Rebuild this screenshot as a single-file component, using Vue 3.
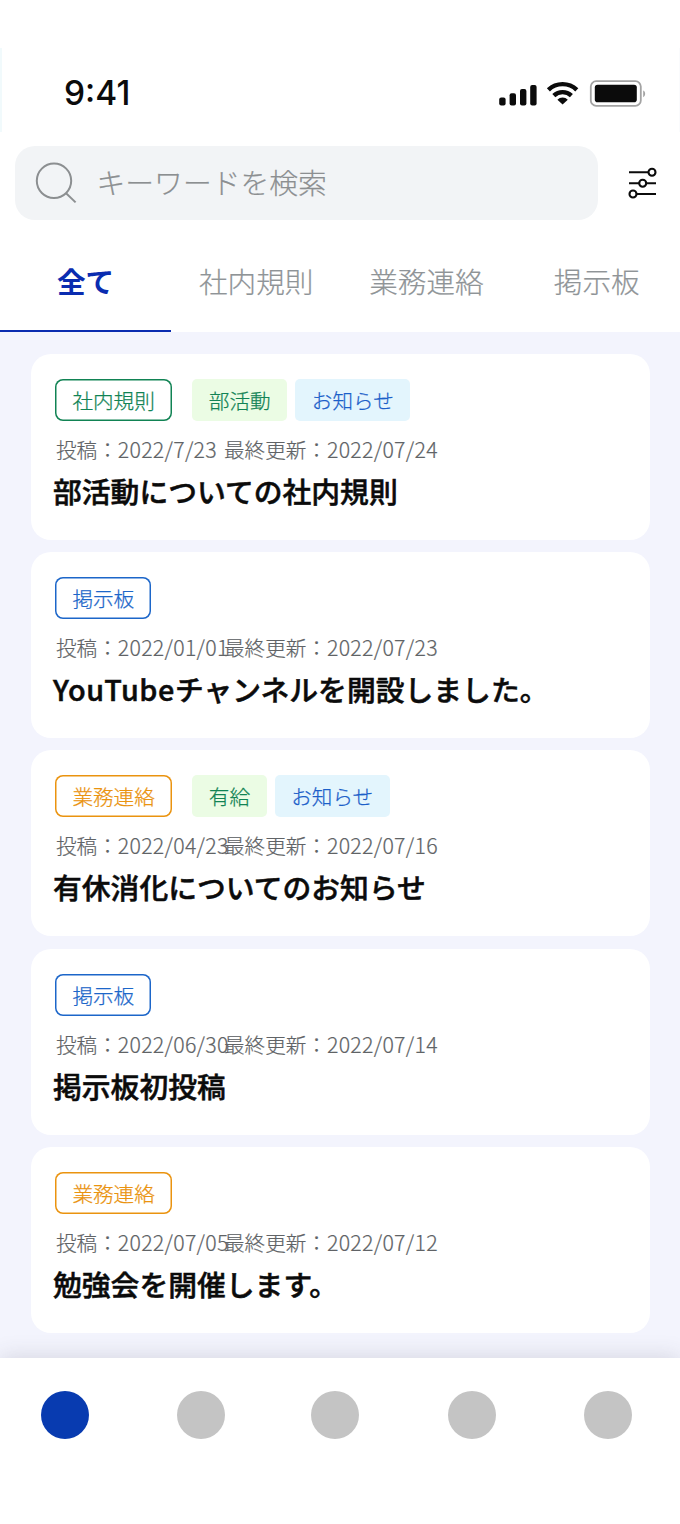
<script setup>
const tabs = ['全て', '社内規則', '業務連絡', '掲示板']

const posts = [
  {
    category: { text: '社内規則', tone: 'green' },
    tags: [{ text: '部活動', tone: 'leaf' }, { text: 'お知らせ', tone: 'sky' }],
    posted: '2022/7/23',
    updated: '2022/07/24',
    title: '部活動についての社内規則',
  },
  {
    category: { text: '掲示板', tone: 'blue' },
    tags: [],
    posted: '2022/01/01',
    updated: '2022/07/23',
    latin: 'YouTube',
    title: 'チャンネルを開設しました。',
  },
  {
    category: { text: '業務連絡', tone: 'orange' },
    tags: [{ text: '有給', tone: 'leaf' }, { text: 'お知らせ', tone: 'sky' }],
    posted: '2022/04/23',
    updated: '2022/07/16',
    title: '有休消化についてのお知らせ',
  },
  {
    category: { text: '掲示板', tone: 'blue' },
    tags: [],
    posted: '2022/06/30',
    updated: '2022/07/14',
    title: '掲示板初投稿',
  },
  {
    category: { text: '業務連絡', tone: 'orange' },
    tags: [],
    posted: '2022/07/05',
    updated: '2022/07/12',
    title: '勉強会を開催します。',
  },
]
</script>

<template>
  <div class="screen">
    <header class="status">
      <span class="time">9:41</span>
      <svg class="indicators" width="150" height="32" viewBox="0 0 150 32">
        <g fill="#0b0b0b">
          <rect x="3.2" y="20.4" width="6.4" height="8.2" rx="2" />
          <rect x="13.6" y="16.2" width="6.4" height="12.4" rx="2" />
          <rect x="24" y="12" width="6.4" height="16.6" rx="2" />
          <rect x="34.2" y="8" width="6.4" height="20.6" rx="2" />
        </g>
        <g fill="none" stroke="#0b0b0b" stroke-width="4.4">
          <path d="M52.4 12.8a20.6 20.6 0 0 1 28.4 0" />
          <path d="M57.8 18.6a12.9 12.9 0 0 1 17.6 0" />
        </g>
        <path d="M61.4 22.8a7.2 7.2 0 0 1 10.4 0L66.6 27.6Z" fill="#0b0b0b" />
        <rect x="94.8" y="4.2" width="50" height="24.6" rx="5.4" fill="none" stroke="#a3a3a3" stroke-width="1.8" />
        <rect x="98.8" y="7.8" width="42" height="17.4" rx="2.8" fill="#0b0b0b" />
        <path d="M147.2 13.6c2.6 1.2 2.6 5.4 0 6.6Z" fill="#a3a3a3" />
      </svg>
    </header>

    <div class="search-row">
      <div class="search">
        <svg class="magnifier" width="44" height="44" viewBox="0 0 44 44" fill="none" stroke="#8c8f91" stroke-width="2">
          <circle cx="20" cy="19.8" r="17.2" />
          <path d="M31.8 32 41.6 41.4" />
        </svg>
        <span class="placeholder">キーワードを検索</span>
      </div>
      <svg class="filter" width="30" height="32" viewBox="0 0 30 32" fill="none" stroke="#0b0b0b" stroke-width="2.1">
        <path d="M1 5.3h19M1 16.2h10M18.4 16.2H28M8.6 27H28" />
        <circle cx="24" cy="5.3" r="3.5" />
        <circle cx="14.7" cy="16.2" r="3.5" />
        <circle cx="5" cy="27" r="3.5" />
      </svg>
    </div>

    <nav class="tabs">
      <div v-for="(tab, i) in tabs" :key="tab" class="tab" :class="{ active: i === 0 }">{{ tab }}</div>
    </nav>

    <main class="feed">
      <article v-for="post in posts" :key="post.title" class="card">
        <div class="tags">
          <span class="tag outlined" :class="post.category.tone">{{ post.category.text }}</span>
          <span v-for="tag in post.tags" :key="tag.text" class="tag" :class="tag.tone">{{ tag.text }}</span>
        </div>
        <div class="meta">
          <span>投稿：<span class="date">{{ post.posted }}</span></span>
          <span>最終更新：<span class="date">{{ post.updated }}</span></span>
        </div>
        <h2 class="title"><span v-if="post.latin" class="latin">{{ post.latin }}</span>{{ post.title }}</h2>
      </article>
    </main>

    <footer class="bottom">
      <i v-for="n in 5" :key="n" class="dot" :class="{ on: n === 1 }"></i>
    </footer>
  </div>
</template>

<style>
body {
  margin: 0;
  background: #fff;
}
</style>

<style scoped>
.screen {
  box-sizing: border-box;
  width: 680px;
  height: 1524px;
  padding-top: 48px;
  overflow: hidden;
  display: flex;
  flex-direction: column;
  background: #fff;
  font-family: "Noto Sans CJK JP", sans-serif;
  font-weight: 300;
  white-space: nowrap;
}
.status {
  box-sizing: border-box;
  height: 84px;
  flex: none;
  display: flex;
  justify-content: space-between;
  align-items: center;
  padding: 6px 33px 0 62px;
  border-left: 2px solid #f1fafc;
  border-right: 1px solid #fafbfd;
}
.time {
  font-family: Inter, sans-serif;
  font-weight: 500;
  font-size: 33.5px;
  line-height: 40px;
  color: #0b0b0b;
}
.search-row {
  display: flex;
  align-items: center;
  padding: 14px 0 0 15px;
  height: 74px;
  flex: none;
}
.search {
  box-sizing: border-box;
  width: 583px;
  height: 74px;
  border-radius: 20px;
  background: #f2f4f6;
  display: flex;
  align-items: center;
  gap: 18.5px;
  padding-left: 19px;
  font-size: 28.8px;
  color: #8c8f91;
}
.placeholder {
  padding-bottom: 4px;
  -webkit-text-stroke: 0.2px currentColor;
}
.filter {
  margin-left: 30px;
}
.tabs {
  display: grid;
  grid-template-columns: 171px repeat(3, 170.3px);
  height: 112px;
  flex: none;
}
.tab {
  box-sizing: border-box;
  padding-top: 40px;
  line-height: 42px;
  text-align: center;
  font-size: 28.6px;
  color: #8f9497;
  -webkit-text-stroke: 0.2px currentColor;
}
.active {
  color: #0a2cb0;
  font-weight: 700;
  -webkit-text-stroke: 0;
  border-bottom: 2px solid #0a2cb0;
}
.feed {
  height: 1026px;
  flex: none;
  box-sizing: border-box;
  padding: 22px 30px 0 31px;
  display: flex;
  flex-direction: column;
  gap: 12.2px;
  background: #f3f4fd;
}
.card {
  box-sizing: border-box;
  height: 186px;
  flex: none;
  padding: 25px 0 0 24.4px;
  border-radius: 20px;
  background: #fff;
}
.tags {
  display: flex;
  gap: 8px;
  height: 42px;
}
.tag {
  box-sizing: border-box;
  height: 42px;
  padding: 0 16.6px;
  border-radius: 5px;
  font-size: 20.6px;
  line-height: 42px;
  -webkit-text-stroke: 0.25px currentColor;
}
.outlined {
  box-shadow: inset 0 0 0 1.5px currentColor;
  border-radius: 8px;
  margin-right: 12.5px;
  padding: 0 17px;
}
.green {
  color: #118354;
}
.blue {
  color: #1c66c9;
}
.orange {
  color: #ea930f;
}
.leaf {
  color: #118354;
  background: #ebfce4;
}
.sky {
  color: #1c5fc9;
  background: #e3f5fd;
}
.meta {
  display: grid;
  grid-template-columns: 168px 1fr;
  margin-top: 13px;
  padding-left: 0.6px;
  height: 30px;
  line-height: 30px;
  font-size: 20.6px;
  color: #606366;
  -webkit-text-stroke: 0.2px currentColor;
}
.date {
  font-size: 21.3px;
  letter-spacing: 0.3px;
}
.title {
  margin: 7px 0 0 -2.4px;
  font-size: 28.8px;
  line-height: 40px;
  font-weight: 500;
  color: #0b0b0b;
  -webkit-text-stroke: 0.5px currentColor;
}
.latin {
  letter-spacing: 0.6px;
}
.bottom {
  flex: 1;
  display: flex;
  justify-content: space-between;
  align-items: flex-start;
  padding: 33px 48px 0 41px;
  background: #fff;
  box-shadow: 0 0 22px rgba(60, 60, 80, 0.18);
}
.dot {
  width: 48px;
  height: 48px;
  border-radius: 50%;
  background: #c4c4c4;
}
.dot:nth-child(3) {
  margin: 0 1px 0 -2px;
}
.on {
  background: #083bb0;
}
</style>
